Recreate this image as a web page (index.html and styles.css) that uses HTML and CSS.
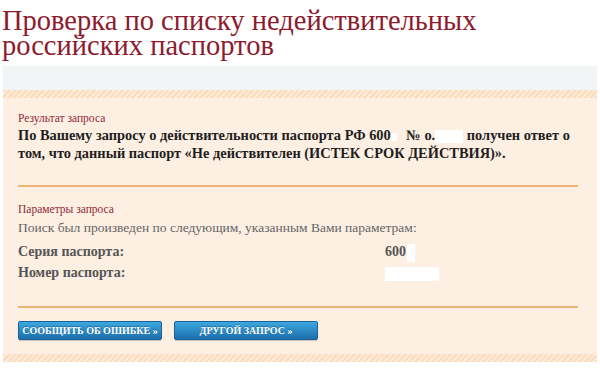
FILE: index.html
```html
<!DOCTYPE html>
<html lang="ru">
<head>
    <meta charset="UTF-8">
    <title>Проверка по списку недействительных российских паспортов</title>
    <link rel="stylesheet" href="styles.css">
</head>
<body>
    <h1 class="page-title">Проверка по списку недействительных<br>российских паспортов</h1>

    <div class="panel">
        <div class="panel-top"></div>
        <div class="stripe"></div>

        <div class="panel-body">
            <!-- Result -->
            <div class="section">
                <div class="section-label">Результат запроса</div>
                <p class="result-text">По Вашему запросу о действительности паспорта РФ 600<span class="redact redact-small"></span> № о.<span class="redact redact-num"></span> получен ответ о<br>том, что данный паспорт «Не действителен (ИСТЕК СРОК ДЕЙСТВИЯ)».</p>
            </div>

            <hr class="divider">

            <!-- Params -->
            <div class="section">
                <div class="section-label">Параметры запроса</div>
                <p class="params-note">Поиск был произведен по следующим, указанным Вами параметрам:</p>
                <div class="param-row">
                    <span class="param-name">Серия паспорта:</span>
                    <span class="param-value">600<span class="redact redact-series"></span></span>
                </div>
                <div class="param-row">
                    <span class="param-name">Номер паспорта:</span>
                    <span class="param-value"><span class="redact redact-number"></span></span>
                </div>
            </div>

            <hr class="divider divider-low">

            <div class="actions">
                <a href="#" class="btn">Сообщить об ошибке »</a>
                <a href="#" class="btn">Другой запрос »</a>
            </div>
        </div>

        <div class="stripe"></div>
    </div>
</body>
</html>
```

FILE: styles.css
```css
body {
    margin: 0;
    padding: 0;
    background-color: #fff;
    font-family: "Liberation Serif", "DejaVu Serif", serif;
    color: #222;
}

.page-title {
    margin: 0;
    padding: 8px 2px 8px;
    font-size: 28.5px;
    font-weight: normal;
    line-height: 25px;
    color: #8d1b2d;
}

.panel {
    margin: 0 3px;
}

.panel-top {
    height: 24px;
    background-color: #f2f5f6;
}

.stripe {
    height: 8px;
    background: repeating-linear-gradient(135deg, #fbdcbb 0 2px, #fdeadb 2px 4px);
}

.panel-body {
    background-color: #fdefe2;
    padding: 12px 19px 14px 15px;
}

.section-label {
    font-size: 11.5px;
    line-height: 16px;
    color: #8e2a3a;
}

.result-text {
    margin: 0;
    font-size: 14.4px;
    font-weight: bold;
    line-height: 18px;
    color: #1e1e1e;
}

.redact {
    display: inline-block;
    background-color: #fff;
    vertical-align: middle;
}

.redact-small {
    width: 6px;
    height: 8px;
    margin-right: 6px;
}

.redact-num {
    width: 28px;
    height: 13px;
}

.redact-series {
    width: 8px;
    height: 18px;
    margin-left: 1px;
}

.redact-number {
    width: 54px;
    height: 14px;
}

.divider {
    border: none;
    height: 2px;
    background-color: #ebb578;
    margin: 23px 0 14px;
}

.divider-low {
    margin: 23px 0 13px;
}

.params-note {
    margin: 3px 0 5px;
    font-size: 13.5px;
    line-height: 16px;
    color: #666;
}

.param-row {
    display: flex;
    font-size: 14px;
    font-weight: bold;
    line-height: 21px;
    color: #555;
}

.param-name {
    width: 367px;
}

.actions {
    display: flex;
    gap: 12px;
}

.btn {
    display: block;
    width: 142px;
    height: 17px;
    line-height: 17px;
    text-align: center;
    white-space: nowrap;
    font-size: 10px;
    font-weight: bold;
    text-transform: uppercase;
    text-decoration: none;
    color: #fff;
    background: linear-gradient(#3ca8de, #1c6eab);
    border: 1px solid #1a6299;
    border-radius: 2px;
    text-shadow: 0 -1px 0 rgba(0, 0, 0, 0.3);
    box-shadow: 0 1px 1px rgba(0, 0, 0, 0.2);
}
```
